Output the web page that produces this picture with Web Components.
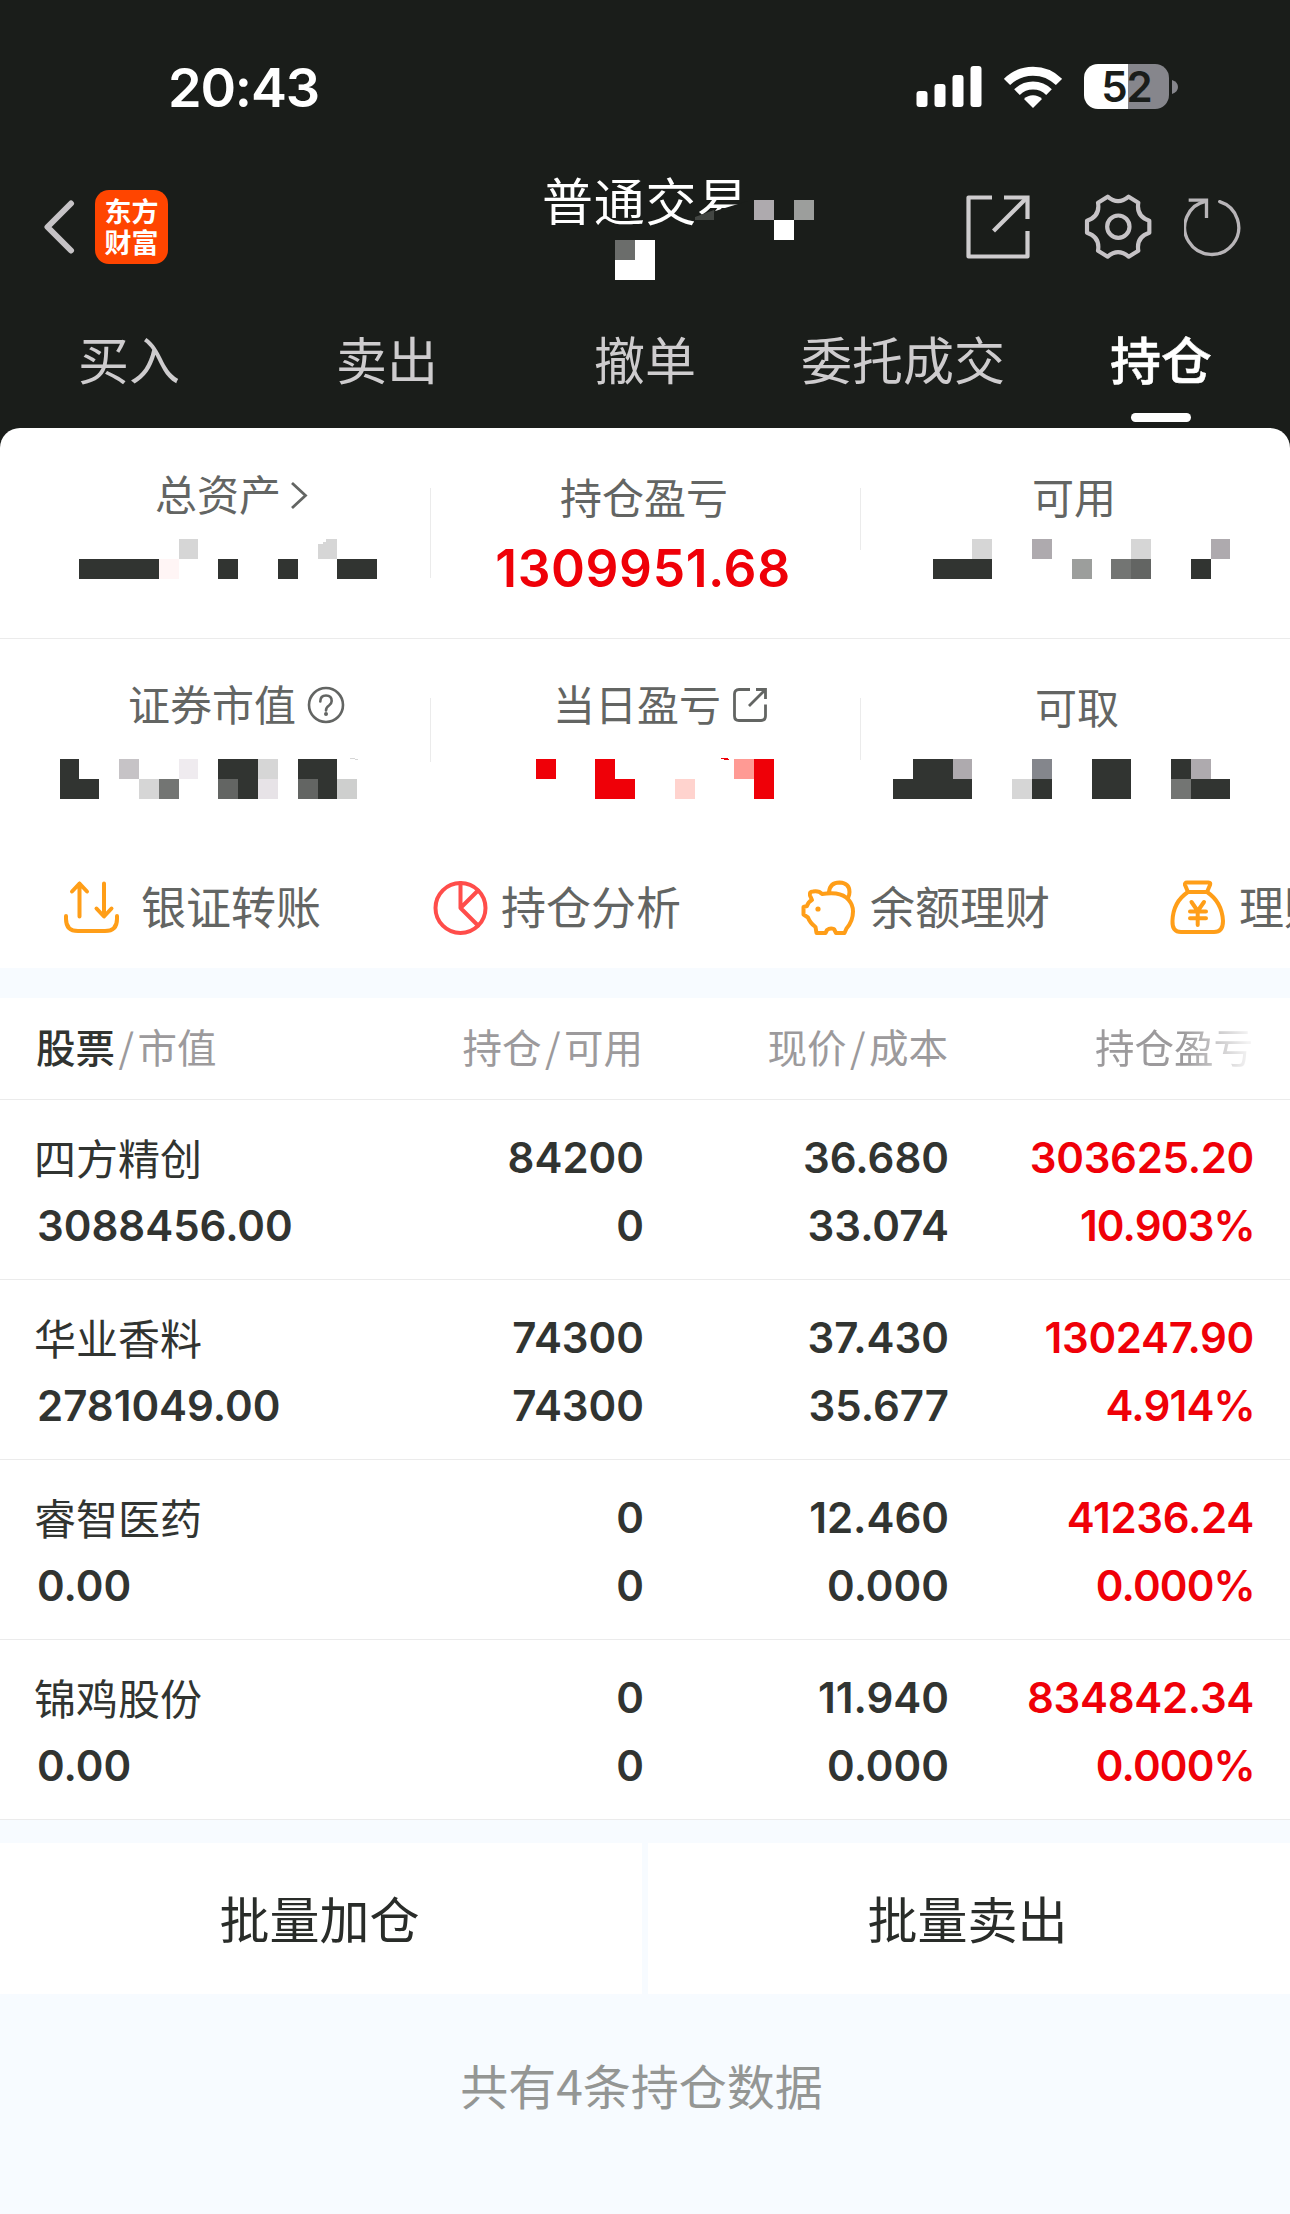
<!DOCTYPE html>
<html lang="zh-CN">
<head>
<meta charset="utf-8">
<title>持仓</title>
<style>
  html, body { margin: 0; padding: 0; background: #f7fbff; }
  body { width: 1290px; height: 2214px; overflow: hidden; font-family: "Noto Sans CJK SC", sans-serif; }
</style>
</head>
<body>
<trade-app></trade-app>
<script>
const CJK = '"Noto Sans CJK SC", sans-serif';
const NUM = 'Inter, "Liberation Sans", sans-serif';

function define(name, render) {
  customElements.define(name, class extends HTMLElement {
    connectedCallback() {
      if (this.shadowRoot) return;
      this.attachShadow({ mode: 'open' }).innerHTML = render(this);
    }
  });
}

define('phone-status', () => `
  <style>
    :host { display: flex; height: 150px; box-sizing: border-box; padding: 57px 112px 0 168px; justify-content: space-between; align-items: flex-start; color: #fff; font-family: ${NUM}; }
    .time { font-size: 54px; font-weight: 600; line-height: 61px; letter-spacing: -1.2px; }
    .right { display: flex; align-items: center; height: 59px; }
    .wifi { margin-left: 22px; }
    .battery { margin-left: 22px; width: 85px; height: 45px; border-radius: 14px; background: linear-gradient(90deg, #fff 44px, #86868c 44px); color: #1a1d1a; font-size: 42px; font-weight: 600; line-height: 45px; text-align: center; letter-spacing: -1px; }
    .nub { margin-left: 3px; }
  </style>
  <span class="time">20:43</span>
  <div class="right">
    <svg width="66" height="43" viewBox="0 0 66 43" fill="#fff"><rect x="0.5" y="26" width="11" height="16" rx="3"/><rect x="18.5" y="19" width="11" height="23" rx="3"/><rect x="36.500" y="10" width="11" height="32" rx="3"/><rect x="54.500" y="1" width="11" height="41" rx="3"/></svg>
    <svg class="wifi" width="58" height="44" viewBox="0 0 58 44" fill="none" stroke="#fff"><path d="M3 17A36.800 36.800 0 0 1 55 17" stroke-width="8.800"/><path d="M13 27.200A22.700 22.700 0 0 1 45 27.200" stroke-width="8"/><path d="M29 43L20 34A12.700 12.700 0 0 1 38 34Z" fill="#fff" stroke="none"/></svg>
    <div class="battery">52</div>
    <svg class="nub" width="6" height="14" viewBox="0 0 6 14"><path d="M0 0Q6 2 6 7T0 14Z" fill="#86868c"/></svg>
  </div>`);

define('app-header', () => `
  <style>
    :host { display: flex; height: 154px; align-items: center; padding: 0 46px 0 43px; box-sizing: border-box; }
    .logo { margin-left: 20px; width: 73px; height: 74px; border-radius: 14px; background: #ff4500; color: #fff; font: 700 27px/31px ${CJK}; text-align: center; box-sizing: border-box; padding-top: 5px; }
    .title { position: relative; align-self: flex-start; margin: 19px 0 0 374px; color: #fff; font: 400 51px/60px ${CJK}; letter-spacing: 0.7px; white-space: nowrap; }
    .title svg { position: absolute; left: 0; top: 21px; }
    .actions { margin-left: auto; display: flex; align-items: center; }
  </style>
  <svg width="32" height="54" viewBox="0 0 32 54" fill="none" stroke="#c6c3c6" stroke-width="6" stroke-linecap="round" stroke-linejoin="round"><path d="M28 3.500L4.500 27L28 50.500"/></svg>
  <div class="logo">东方<br>财富</div>
  <div class="title">普通交易
    <svg width="275" height="95" viewBox="0 0 275 95">
      <path d="M152 27L170 22L196 14L206 11V38H152Z" fill="#1a1d1a"/>
      <path d="M153 27L172 20V30H153Z" fill="#424542"/>
      <path d="M212 10h20v20h-20z" fill="#aeaaae"/><path d="M252 10h20v20h-20z" fill="#9c9e9c"/><path d="M232 30h20v20h-20zM73 50h40v40h-40z" fill="#fff"/><path d="M73 50h20v20h-20z" fill="#6b6d6b"/>
    </svg>
  </div>
  <div class="actions">
    <svg width="64" height="64" viewBox="0 0 64 64" fill="none" stroke="#ceccce" stroke-width="4.200" stroke-linejoin="round"><path d="M26 2.500H2.500V61.500H61.500V36"/><path d="M38 2.500H61.500V24" stroke-linejoin="miter"/><path d="M27.500 36L60 3.500"/></svg>
    <svg style="margin-left:54px" width="68" height="68" viewBox="670 460 204 204" fill="none" stroke="#c6c3c6" stroke-width="12.500" stroke-linejoin="round"><path d="M741 471Q772 498 804 471L833 489Q826 530 866 543V579Q826 592 833 633L804 651Q772 624 741 651L712 633Q719 592 679 579V543Q719 530 712 489Z"/><circle cx="773" cy="561" r="33.500"/></svg>
    <svg style="margin-left:32px" width="60" height="62" viewBox="966 468 180 186" fill="none" stroke="#b8b5b8" stroke-width="10"><path d="M1073 485A81 81 0 1 1 1033 483" stroke-linecap="round"/><path d="M980 480.500H1033.500V534"/></svg>
  </div>`);

define('trade-tab', el => `
  <style>
    :host { display: flex; flex-direction: column; align-items: center; width: 258px; height: 124px; color: #ceccce; font: 400 51px/64px ${CJK}; padding-top: 22px; box-sizing: border-box; }
    :host([active]) { color: #fff; font-weight: 500; -webkit-text-stroke: 0.5px #fff; }
    i { display: none; width: 60px; height: 9px; border-radius: 4.500px; background: #fff; margin-top: 23px; }
    :host([active]) i { display: block; }
  </style><span><slot></slot></span><i></i>`);

define('trade-tabs', () => `
  <style>:host { display: flex; height: 124px; }</style>
  <trade-tab>买入</trade-tab><trade-tab>卖出</trade-tab><trade-tab>撤单</trade-tab><trade-tab>委托成交</trade-tab><trade-tab active>持仓</trade-tab>`);

/* Redacted amount; each entry of "cells" is x,y,width,height,colour. */
define('mosaic-value', el => `
  <style>:host, svg { display: block; }</style>
  <svg width="430" height="42" viewBox="0 -1 430 42" shape-rendering="crispEdges">${
    el.getAttribute('cells').trim().split(/\s+/).map(c => {
      const [x, y, w, h, f] = c.split(',');
      return `<rect x="${x}" y="${y}" width="${w}" height="${h}" fill="#${f}"/>`;
    }).join('')}</svg>`);

define('asset-cell', el => `
  <style>
    :host { display: flex; width: 430px; }
    .body { width: 430px; flex: none; }
    .label { display: flex; align-items: flex-start; box-sizing: border-box; height: var(--head); padding: var(--t) 0 0 var(--x); color: #636563; font: 400 42px/50px ${CJK}; white-space: nowrap; }
    .value { display: block; margin-left: -4px; text-align: center; color: #ef0008; font: 560 51.500px/61px ${NUM}; letter-spacing: 0.6px; }
    .rule { flex: none; width: 1px; margin: var(--rt) 0 0 0; height: var(--rh, 0px); background: #ebebeb; }
  </style>
  <div class="body"><div class="label"><slot></slot><slot name="icon"></slot></div><slot name="value"></slot>${el.hasAttribute('value') ? `<span class="value">${el.getAttribute('value')}</span>` : ''}</div><div class="rule"></div>`);

define('asset-summary', () => `
  <style>
    :host { display: block; background: #fff; border-radius: 20px 20px 0 0; }
    .row { display: flex; }
    .row.a { --head: 110px; --rt: 60px; height: 210px; border-bottom: 1px solid #ebebeb; }
    .row.b { --head: 119px; --rt: 59px; height: 209px; }
    svg { display: block; flex: none; }
  </style>
  <div class="row a">
    <asset-cell style="--t:40px;--x:155px;--rh:90px">总资产
      <svg slot="icon" style="margin:13px 0 0 9px" width="20" height="30" viewBox="0 0 20 30" fill="none" stroke="#636563" stroke-width="2.800"><path d="M2 2L15.500 14.500L2 27"/></svg>
      <mosaic-value slot="value" cells="179,0,19,20,d6d6d6 79,20,80,20,313431 159,20,20,20,fff5f5 218,20,20,20,313431 278,20,20,20,313431 318,5,19,15,d6d6d6 323,3,14,3,d6d6d6 326,0,11,6,d6d6d6 337,20,40,20,313431"></mosaic-value>
    </asset-cell>
    <asset-cell style="--t:43px;--x:130px;--rh:62px" value="1309951.68">持仓盈亏</asset-cell>
    <asset-cell style="--t:43px;--x:172px">可用
      <mosaic-value slot="value" cells="112,0,20,20,d6d6d6 73,20,59,20,313431 172,0,20,20,aeaaae 212,20,20,20,9c9e9c 251,20,20,20,737573 271,20,20,20,636563 271,0,20,20,d6d6d6 331,20,20,20,313431 351,0,19,20,aeaaae"></mosaic-value>
    </asset-cell>
  </div>
  <div class="row b">
    <asset-cell style="--t:39px;--x:128px;--rh:64px">证券市值
      <svg slot="icon" style="margin:8px 0 0 11px" width="38" height="38" viewBox="0 0 38 38" fill="none" stroke="#636563" stroke-width="2.600"><circle cx="19" cy="19" r="17"/><path d="M13.300 15.500Q13.300 9.500 19 9.500T24.700 15Q24.700 17.500 22 19.500Q19 21.500 19 24.500" stroke-linecap="round"/><circle cx="19" cy="28" r="2" fill="#636563" stroke="none"/></svg>
      <mosaic-value slot="value" cells="60,0,19,40,313431 60,20,39,20,313431 119,0,20,20,c6c3c6 139,20,20,20,d6d6d6 159,20,20,20,737573 179,0,19,20,efebef 218,0,40,20,313431 258,0,20,20,d6d6d6 218,20,20,20,636563 238,20,20,20,313431 258,20,20,20,e7e3e7 298,0,39,20,313431 298,20,20,20,636563 318,20,19,20,313431 337,20,20,20,cecfce 350,-1,5,1,d6d6d6 355,0,3,1,d6d6d6"></mosaic-value>
    </asset-cell>
    <asset-cell style="--t:39px;--x:123px;--rh:62px">当日盈亏
      <svg slot="icon" style="margin:9px 0 0 11px" width="36" height="36" viewBox="0 0 36 36" fill="none" stroke="#636563" stroke-width="2.800"><path d="M18 2.500H7Q2.500 2.500 2.500 7V29Q2.500 33.500 7 33.500H29Q33.500 33.500 33.500 29V17.500"/><path d="M24 2.500H33.500V12M33 3L17 19"/></svg>
      <mosaic-value slot="value" cells="106,0,20,20,ef0008 165,0,20,40,ef0008 165,20,40,20,ef0008 245,20,20,20,ffd3ce 304,0,20,20,ff9a94 324,0,20,40,ef0008 291,-1,7,1,ef0008 294,0,5,1,ef0008"></mosaic-value>
    </asset-cell>
    <asset-cell style="--t:42px;--x:175px">可取
      <mosaic-value slot="value" cells="33,20,79,20,313431 53,0,40,20,313431 93,0,19,20,aeaaae 152,20,20,20,d6d6d6 172,0,20,20,84868c 172,20,20,20,313431 232,0,39,40,313431 311,0,20,20,313431 331,0,20,20,aeaaae 311,20,20,20,737573 331,20,39,20,313431"></mosaic-value>
    </asset-cell>
  </div>`);

define('quick-link', () => `
  <style>
    :host { display: flex; flex: none; width: 369px; height: 120px; align-items: center; }
    span { margin-left: var(--gap, 12px); padding-bottom: 5px; color: #636563; font: 400 45px/56px ${CJK}; white-space: nowrap; }
  </style><slot name="icon"></slot><span><slot></slot></span>`);

define('quick-links', () => `
  <style>
    :host { display: flex; background: #fff; padding-left: 63px; overflow: hidden; width: 1227px; }
    svg { display: block; flex: none; fill: none; stroke: #ff9e18; stroke-width: 4; stroke-linecap: round; stroke-linejoin: round; }
  </style>
  <quick-link style="--gap:21px">
    <svg slot="icon" width="57" height="56" viewBox="0 0 57 56"><path d="M16.500 36.500V3.500M9 11.500L16.500 3.500L24 11.500M41 3.500V36M33.500 28.500L41 36.500L48.500 28.500M3 36v3q0 12 12 12h27q12 0 12-12v-3"/></svg>银证转账</quick-link>
  <quick-link>
    <svg slot="icon" style="stroke:#ff4d4a" width="57" height="56" viewBox="0 0 57 56"><circle cx="28.500" cy="28" r="25"/><path d="M28.500 3V28L46 10.500M28.500 28L46 45.500"/></svg>持仓分析</quick-link>
  <quick-link>
    <svg slot="icon" width="57" height="56" viewBox="0 0 57 56"><path d="M11 20L9 15.500Q8 11.500 12 11.500Q18 10.500 21 14Q28 13 35 13.500C46 15 52 23 52 31.500Q52 41 45.500 48.500L43.500 53H35L33 49Q29 47.500 26 50L24.500 53H15.500L14.500 47Q9 43 7 37.500L2.500 34.500V27L6 26Q7 22 11 20Z"/><path d="M28 12Q29 2.500 38.500 2.500Q48.500 3 48.500 12Q48.500 15 47 18"/><circle cx="17" cy="29" r="2.600" fill="#ff9e18" stroke="none"/></svg>余额理财</quick-link>
  <quick-link>
    <svg slot="icon" width="57" height="56" viewBox="0 0 57 56"><path d="M18 12L15 5Q14.500 2.500 17 2.500H38.500Q41 2.500 40 5L37 12"/><path d="M18 12H37Q52 22 53 41Q53 52 44 52H11Q2 52 2.500 41Q3 22 18 12Z"/><path d="M21.500 22L27.700 31L34 22M27.700 31V45M20 31.500H36M20 38.300H36"/></svg>理财</quick-link>`);

define('holdings-head', () => `
  <style>
    :host { display: grid; grid-template-columns: 303px 304px 305px 305px; height: 102px; box-sizing: border-box; padding: 18px 37px 0 36px; border-bottom: 1px solid #ebebeb; background: #fff; color: #9c9a9c; font: 400 39.500px/60px ${CJK}; text-align: right; white-space: nowrap; }
    b { font-weight: 500; color: #313431; }
    i { font-style: normal; margin: 0 3.500px; }
    .first { text-align: left; }
    .fade { -webkit-mask-image: linear-gradient(90deg, #000 235px, rgba(0,0,0,.12) 300px); mask-image: linear-gradient(90deg, #000 235px, rgba(0,0,0,.12) 300px); }
  </style>
  <div class="first"><b>股票</b><i>/</i>市值</div><div>持仓<i>/</i>可用</div><div>现价<i>/</i>成本</div><div class="fade">持仓盈亏</div>`);

define('holding-row', el => {
  const [name, mv, qty, avail, price, cost, pl, pct] = el.getAttribute('data').split('|');
  return `
  <style>
    :host { display: grid; grid-template-columns: 303px 304px 305px 305px; height: 180px; box-sizing: border-box; padding: 24px 36px 0 37px; border-bottom: 1px solid #ebebeb; background: #fff; color: #313431; font: 560 42px/68px ${NUM}; text-align: right; white-space: nowrap; }
    div { display: flex; flex-direction: column; }
    .first { text-align: left; }
    .name { height: 68px; font: 400 42px/65px ${CJK}; margin-left: -3px; }
    .up { color: #ef0008; }
    .up span:first-child { letter-spacing: -0.3px; }
    .up span:last-child { letter-spacing: -0.8px; margin-right: -1px; }
  </style>
  <div class="first"><span class="name">${name}</span><span>${mv}</span></div>
  <div><span>${qty}</span><span>${avail}</span></div>
  <div><span>${price}</span><span>${cost}</span></div>
  <div class="up"><span>${pl}</span><span>${pct}</span></div>`;
});

define('batch-actions', () => `
  <style>
    :host { display: flex; gap: 6px; margin-top: 23px; height: 151px; }
    div { flex: 1; box-sizing: border-box; background: #fff; color: #292c29; text-align: center; font: 400 50px/148px ${CJK}; padding-right: 3px; }
  </style><div>批量加仓</div><div>批量卖出</div>`);

define('list-note', () => `
  <style>:host { display: block; margin-top: 60px; text-align: center; color: #949694; font: 400 48px/60px ${CJK}; padding-right: 7px; }</style><slot></slot>`);

define('trade-app', () => `
  <style>
    :host { display: block; width: 1290px; height: 2214px; overflow: hidden; background: #f7fbff; }
    .dark { background: #1a1d1a; }
    .gap { height: 30px; }
  </style>
  <div class="dark">
    <phone-status></phone-status>
    <app-header></app-header>
    <trade-tabs></trade-tabs>
    <asset-summary></asset-summary>
  </div>
  <quick-links></quick-links>
  <div class="gap"></div>
  <holdings-head></holdings-head>
  <holding-row data="四方精创|3088456.00|84200|0|36.680|33.074|303625.20|10.903%"></holding-row>
  <holding-row data="华业香料|2781049.00|74300|74300|37.430|35.677|130247.90|4.914%"></holding-row>
  <holding-row data="睿智医药|0.00|0|0|12.460|0.000|41236.24|0.000%"></holding-row>
  <holding-row data="锦鸡股份|0.00|0|0|11.940|0.000|834842.34|0.000%"></holding-row>
  <batch-actions></batch-actions>
  <list-note>共有4条持仓数据</list-note>`);
</script>
</body>
</html>
